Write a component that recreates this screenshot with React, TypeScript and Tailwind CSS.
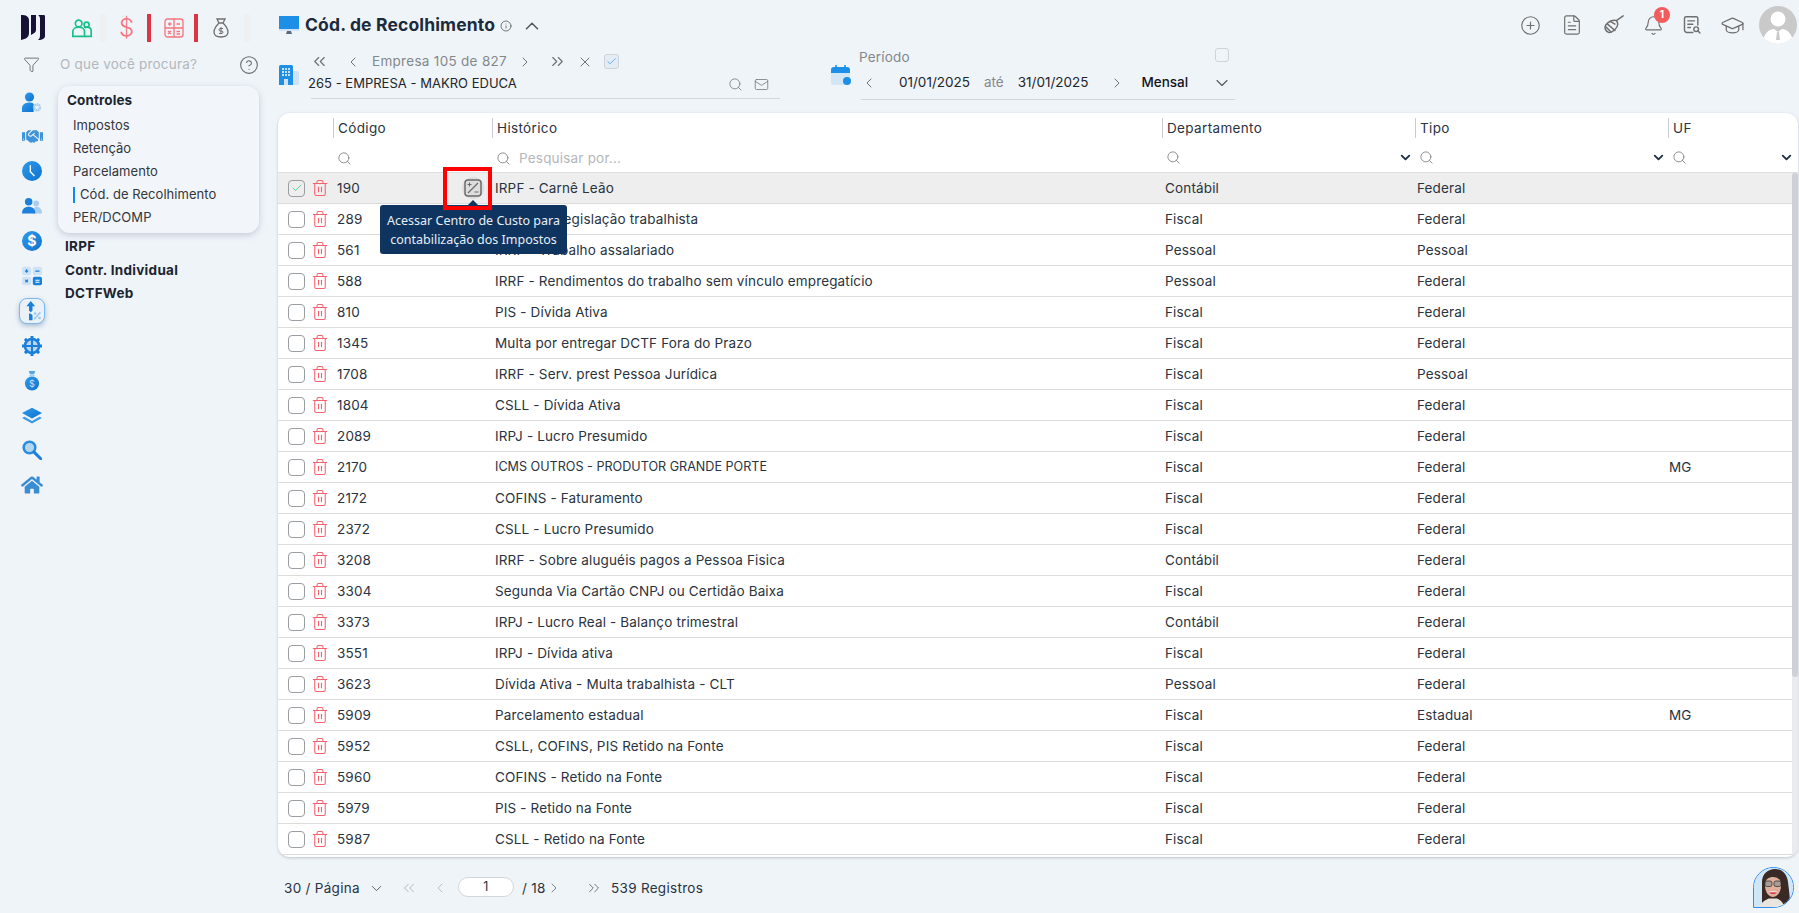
import { ReactNode } from 'react';
import {
  Bell,
  Check,
  ChevronDown,
  ChevronLeft,
  ChevronRight,
  ChevronUp,
  ChevronsLeft,
  ChevronsRight,
  CircleHelp,
  CirclePlus,
  FileText,
  Filter,
  GraduationCap,
  Info,
  Mail,
  Search,
  Trash2,
  X,
} from 'lucide-react';
import { FaHandshake, FaHome } from 'react-icons/fa';

type Row = { code: string; hist: string; dept: string; tipo: string; uf?: string };

const rows: Row[] = [
  { code: '190', hist: 'IRPF - Carnê Leão', dept: 'Contábil', tipo: 'Federal' },
  { code: '289', hist: 'Multa de Legislação trabalhista', dept: 'Fiscal', tipo: 'Federal' },
  { code: '561', hist: 'IRRF - Trabalho assalariado', dept: 'Pessoal', tipo: 'Pessoal' },
  { code: '588', hist: 'IRRF - Rendimentos do trabalho sem vínculo empregatício', dept: 'Pessoal', tipo: 'Federal' },
  { code: '810', hist: 'PIS - Dívida Ativa', dept: 'Fiscal', tipo: 'Federal' },
  { code: '1345', hist: 'Multa por entregar DCTF Fora do Prazo', dept: 'Fiscal', tipo: 'Federal' },
  { code: '1708', hist: 'IRRF - Serv. prest Pessoa Jurídica', dept: 'Fiscal', tipo: 'Pessoal' },
  { code: '1804', hist: 'CSLL - Dívida Ativa', dept: 'Fiscal', tipo: 'Federal' },
  { code: '2089', hist: 'IRPJ - Lucro Presumido', dept: 'Fiscal', tipo: 'Federal' },
  { code: '2170', hist: 'ICMS OUTROS - PRODUTOR GRANDE PORTE', dept: 'Fiscal', tipo: 'Federal', uf: 'MG' },
  { code: '2172', hist: 'COFINS - Faturamento', dept: 'Fiscal', tipo: 'Federal' },
  { code: '2372', hist: 'CSLL - Lucro Presumido', dept: 'Fiscal', tipo: 'Federal' },
  { code: '3208', hist: 'IRRF - Sobre aluguéis pagos a Pessoa Fisica', dept: 'Contábil', tipo: 'Federal' },
  { code: '3304', hist: 'Segunda Via Cartão CNPJ ou Certidão Baixa', dept: 'Fiscal', tipo: 'Federal' },
  { code: '3373', hist: 'IRPJ - Lucro Real - Balanço trimestral', dept: 'Contábil', tipo: 'Federal' },
  { code: '3551', hist: 'IRPJ - Dívida ativa', dept: 'Fiscal', tipo: 'Federal' },
  { code: '3623', hist: 'Dívida Ativa - Multa trabalhista - CLT', dept: 'Pessoal', tipo: 'Federal' },
  { code: '5909', hist: 'Parcelamento estadual', dept: 'Fiscal', tipo: 'Estadual', uf: 'MG' },
  { code: '5952', hist: 'CSLL, COFINS, PIS Retido na Fonte', dept: 'Fiscal', tipo: 'Federal' },
  { code: '5960', hist: 'COFINS - Retido na Fonte', dept: 'Fiscal', tipo: 'Federal' },
  { code: '5979', hist: 'PIS - Retido na Fonte', dept: 'Fiscal', tipo: 'Federal' },
  { code: '5987', hist: 'CSLL - Retido na Fonte', dept: 'Fiscal', tipo: 'Federal' },
];

const gridCols = 'grid grid-cols-[55px_159px_670px_253px_253px_1fr]';

const Svg = ({ children, size = 20 }: { children: ReactNode; size?: number }) => (
  <svg width={size} height={size} viewBox="0 0 24 24">
    {children}
  </svg>
);

const sideIcons: ReactNode[] = [
  <Svg key="a">
    <circle cx="9" cy="6" r="5.500" fill="url(#blue)" />
    <path d="M0 24v-5c0-4 4-6.500 9-6.500 2 0 4 .5 5 1.500v10z" fill="url(#blue)" />
    <circle cx="18" cy="18.500" r="3.500" fill="none" stroke="#a9cdec" strokeWidth="3" strokeDasharray="2 .6" />
  </Svg>,
  <FaHandshake key="b" size={21} color="#3f93d8" />,
  <Svg key="c">
    <circle cx="12" cy="12" r="12" fill="url(#blue)" />
    <path d="M10 5v8l5 5" fill="none" stroke="#fff" strokeWidth="1.600" />
  </Svg>,
  <Svg key="d">
    <circle cx="17" cy="9" r="3.500" fill="#a9cdec" />
    <path d="M12 21c0-5 3-8 6-8s6 3 6 8z" fill="#a9cdec" />
    <circle cx="8" cy="7" r="4.500" fill="#1a80dc" />
    <path d="M0 21c0-5 3-8 8-8s8 3 8 8z" fill="#1a80dc" />
  </Svg>,
  <Svg key="e">
    <circle cx="12" cy="12" r="12" fill="url(#blue)" />
    <text x="12" y="18" textAnchor="middle" fontSize="17" fontWeight="700" fill="#fff" fontFamily="Inter, sans-serif">$</text>
  </Svg>,
  <Svg key="f">
    <rect x="0" y="1" width="11" height="10" rx="2" fill="#cfe3f5" />
    <rect x="13" y="1" width="11" height="10" rx="2" fill="#cfe3f5" />
    <rect x="0" y="13" width="11" height="10" rx="2" fill="#cfe3f5" />
    <rect x="13" y="13" width="11" height="10" rx="2" fill="#1a80dc" />
    <path d="M3.500 6h4M5.500 4v4M16 6h5" stroke="#1a80dc" strokeWidth="1.500" />
    <path d="M4 16.500l3 3M7 16.500l-3 3" stroke="#1a80dc" strokeWidth="1.300" />
    <path d="M16 17h5M16 19.500h5" stroke="#fff" strokeWidth="1.300" />
  </Svg>,
  <div key="g" className="w-[26px] h-[26px] rounded-lg border border-[#7cb9ea] bg-[#eaf1f7] shadow-[0_2px_5px_rgba(80,120,160,0.45)] flex items-center justify-center">
    <Svg size={21}>
      <path d="M10 1l5 6h-3v5l-3 3 3 2v6H8v-7l2-2-2-2V7H5z" fill="#1a80dc" />
      <path d="M21 14L14 22" stroke="#9cc7ea" strokeWidth="1.800" />
      <circle cx="15" cy="15.500" r="1.500" fill="#9cc7ea" />
      <circle cx="20" cy="20.500" r="1.500" fill="#9cc7ea" />
    </Svg>
  </div>,
  <Svg key="h">
    <circle cx="12" cy="12" r="8.500" fill="#bcd9f1" stroke="#1a80dc" strokeWidth="3" />
    <path d="M12 4v16M4 12h16" stroke="#1a80dc" strokeWidth="2.600" />
    <path d="M12 0v3.500M12 20.500V24M0 12h3.500M20.500 12H24M3.500 3.500l2.500 2.500M18 18l2.500 2.500M20.500 3.500L18 6M6 18l-2.500 2.500" stroke="#1a80dc" strokeWidth="3.600" />
  </Svg>,
  <Svg key="i">
    <path d="M8 0h8l-1.500 4h-5z" fill="#5aa7e6" />
    <rect x="9" y="4.500" width="6" height="2" fill="#a9cdec" />
    <circle cx="12" cy="15" r="8.500" fill="url(#blue)" />
    <text x="12" y="19" textAnchor="middle" fontSize="11" fill="#bfe0f8" fontFamily="Inter, sans-serif">$</text>
  </Svg>,
  <Svg key="j">
    <path d="M12 2l12 6.500-12 6.500L0 8.500z" fill="url(#blue)" />
    <path d="M0 14.500l3-1.500 9 5 9-5 3 1.500L12 21z" fill="#3d9ae6" />
  </Svg>,
  <Svg key="k">
    <circle cx="9" cy="9" r="7" fill="#b6d6f0" stroke="#2a8ce0" strokeWidth="3" />
    <path d="M14.500 14.500L22.500 22.500" stroke="#1a80dc" strokeWidth="3.600" strokeLinecap="round" />
  </Svg>,
  <FaHome key="l" size={22} color="#3a8cd3" />,
];

const Percent = ({ className }: { className?: string }) => (
  <svg viewBox="0 0 18 18" width={18} height={18} className={className} fill="none" stroke="#6b6b6b">
    <rect x="1" y="1" width="16" height="16" rx="3" strokeWidth="1.500" />
    <path d="M14 4L4 14" strokeWidth="1.300" />
    <path d="M3.500 5.500h4M5.500 3.500v4M10.500 13h4" strokeWidth="1.100" />
  </svg>
);

const Broom = () => (
  <svg width={22} height={22} viewBox="0 0 24 24" fill="none" stroke="#6f6f6f" strokeWidth="1.600" strokeLinecap="round">
    <path d="M15 7l7-5" />
    <path d="M3 12c3-4 8-6 11-5 3 2 3 6-1 10-3 3-5 4-7 3-3-1-5-5-3-8z" />
    <path d="M5 11l8 7M8 8l5 3M3 14l6 6" />
  </svg>
);

const DocSearch = () => (
  <svg width={20} height={20} viewBox="0 0 24 24" fill="none" stroke="#6f6f6f" strokeWidth="1.700" strokeLinecap="round">
    <path d="M13 21H6a3 3 0 0 1-3-3V4a2 2 0 0 1 2-2h12a2 2 0 0 1 2 2v8" />
    <path d="M7 7h8M7 11h6M7 15h3" />
    <circle cx="17" cy="17" r="2.800" />
    <path d="M19 19l2.500 2.500" />
  </svg>
);

const Avatar = () => (
  <svg width={38} height={38} viewBox="0 0 38 38" className="rounded-full">
    <rect width="38" height="38" fill="#c9c9c9" />
    <circle cx="19" cy="13" r="7.500" fill="#fff" />
    <path d="M4 38c0-10 6-15 11-15l4 3 4-3c5 0 11 5 11 15z" fill="#fff" />
    <path d="M18 26h2l1 8h-4z" fill="#c9c9c9" />
  </svg>
);

const Assistant = () => (
  <svg width={41} height={41} viewBox="0 0 41 41">
    <rect width="41" height="41" fill="#cfe6f6" />
    <path d="M8 34V14C8 6 14 1 21 1s12 5 13 13c1 9 2 14 2 22H8z" fill="#3a2a26" />
    <path d="M11 17c0-6 4-8 8-8s8 2 8 8c0 7-3.500 12-8 12s-8-5-8-12z" fill="#dfb09c" />
    <rect x="11" y="13" width="7" height="5.500" rx="2" fill="#8a8f96" fillOpacity="0.6" stroke="#3b3836" strokeWidth="0.800" />
    <rect x="20" y="13" width="7" height="5.500" rx="2" fill="#8a8f96" fillOpacity="0.6" stroke="#3b3836" strokeWidth="0.800" />
    <path d="M14.500 22.500c3 1.500 6 1.500 9 0-1 3-2.500 3.500-4.500 3.500s-3.500-.5-4.500-3.500z" fill="#d43d4a" />
    <path d="M14.500 23.200h9l-.8 1h-7.400z" fill="#fff" />
    <path d="M5 41c1-6 6-9 10-10.500h8c4 1.500 7 5 8 10.500z" fill="#e9e4de" />
  </svg>
);

const SubItem = ({ label, active }: { label: string; active?: boolean }) => (
  <div className={`h-[23px] flex items-center text-[13px] tracking-[0.05px] text-[#33363b] ${active ? 'pl-0' : ''}`}>
    {active && <span className="w-[2px] h-4 bg-[#1088f2] mr-[5px]" />}
    {label}
  </div>
);

const Section = ({ label }: { label: string }) => (
  <div className="h-[23.500px] flex items-center text-[13.500px] font-bold tracking-[0.3px] text-[#1c2530] pl-[7px]">{label}</div>
);

const HeadCell = ({ label }: { label?: string }) => (
  <div className="flex items-start pt-[5px]">
    <div className="h-5 border-l border-[#c9ccd1] pl-[4px] text-[13.500px] tracking-[0.35px] leading-5 text-[#2a3340]">{label}</div>
  </div>
);

const FilterCell = ({ arrow, placeholder }: { arrow?: boolean; placeholder?: string }) => (
  <div className={`flex items-center h-5 pl-[4px] pr-[2px] gap-[8px] ${arrow ? '-mt-[1px]' : ''}`}>
    <Search size={15} strokeWidth={1.300} className="text-[#77797c]" />
    {placeholder && <span className="text-[13.500px] tracking-[0.2px] text-[#b4b7bb]">{placeholder}</span>}
    {arrow && <ChevronDown size={15} strokeWidth={3} className="ml-auto text-[#1f2f45]" />}
  </div>
);

export default function App() {
  return (
    <div
      className="relative flex w-screen h-screen overflow-hidden bg-[#eff4f9] text-[#2a3340]"
      style={{ fontFamily: 'Inter, "Liberation Sans", sans-serif' }}
    >
      <svg className="absolute w-0 h-0">
        <defs>
          <linearGradient id="blue" x1="0" y1="0" x2="1" y2="1">
            <stop offset="0" stopColor="#2f9bee" />
            <stop offset="1" stopColor="#0f72cc" />
          </linearGradient>
        </defs>
      </svg>

      {/* barra lateral */}
      <aside className="w-[278px] shrink-0 flex flex-col">
        <div className="h-[49px] flex items-center pl-[21px] pt-[6px]">
          <svg width={24} height={25} viewBox="0 0 24 25" fill="#151235">
            <path d="M0 0c5 0 8 1 8 6v12c0 4-3 6-8 7z" />
            <path d="M10 0h5v15c0 2-2 3.500-5 5z" />
            <path d="M17 0h6c.5 0 1 .5 1 2v19c0 2-2 4-7 4 1-1 2-2 2-4V4c0-2-.5-3-2-4z" />
          </svg>
          <span className="ml-[27px]">
            <svg width={20} height={20} viewBox="0 0 24 24" fill="none" stroke="#17c08a" strokeWidth="2">
              <circle cx="8" cy="6.500" r="4" />
              <circle cx="17.500" cy="8" r="3" />
              <path d="M1 22v-6c0-3 3-5 7-5s7 2 7 5v6z" />
              <path d="M15 12c1-1 2-1 3-1 3 0 5 2 5 5v6h-8" />
            </svg>
          </span>
          <span className="ml-[8px] w-[6px] h-7 bg-[#f0f0f0]" />
          <span className="ml-[13px] w-[28px] text-[#f8737c] text-[24px] font-light leading-none">$</span>
          <span className="w-1 h-7 bg-[#dc3545]" />
          <span className="ml-[13px]">
            <svg width={20} height={20} viewBox="0 0 20 20" fill="none" stroke="#f8737c" strokeWidth="1.300">
              <rect x="1" y="1" width="18" height="18" rx="2.500" />
              <path d="M10 1v18M1 10h18M4 6h3.500M5.700 4.200v3.500M12.500 6H16M4 13l3 3M7 13l-3 3M12.500 13.500H16M12.500 16H16" />
            </svg>
          </span>
          <span className="ml-[10px] w-1 h-7 bg-[#dc3545]" />
          <span className="ml-[15px]">
            <svg width={16} height={20} viewBox="0 0 16 20" fill="none" stroke="#6f6f6f" strokeWidth="1.300">
              <path d="M4 1h8l-2 4H6zM6 5C3 8 1 10 1 14c0 3 2 5 7 5s7-2 7-5c0-4-2-6-5-9" />
              <path d="M8 9v7M10 10.500H7a1.300 1.300 0 0 0 0 2.500h2a1.300 1.300 0 0 1 0 2.500H6" strokeWidth="1" />
            </svg>
          </span>
          <span className="ml-[15px] w-[6px] h-7 bg-[#f0f0f0]" />
        </div>

        <div className="h-[31px] flex items-center pl-[23px] pr-[19px]">
          <Filter size={17} strokeWidth={1.300} className="text-[#66696d]" />
          <span className="ml-[20px] text-[13.500px] tracking-[0.2px] text-[#b4b7bb]">O que você procura?</span>
          <CircleHelp size={20} strokeWidth={1.300} className="ml-auto text-[#66696d]" />
        </div>

        <div className="flex pt-[6px]">
          <div className="w-[64px] flex flex-col items-center gap-[9.900px] pt-[3px]">
            {sideIcons.map((icon, i) => (
              <div key={i} className="h-[25px] flex items-center justify-center">
                {icon}
              </div>
            ))}
          </div>
          <nav className="w-[201px] -ml-[6px]">
            <div className="rounded-xl bg-[#f2f6fa] shadow-[0_2px_6px_rgba(120,130,150,0.35)] h-[147px] pl-[9px] pt-[1px]">
              <div className="h-[26px] flex items-center text-[13.500px] font-bold tracking-[0.1px] text-[#1c2530]">Controles</div>
              <div className="pl-[6px] pt-[1px] flex flex-col">
                <SubItem label="Impostos" />
                <SubItem label="Retenção" />
                <SubItem label="Parcelamento" />
                <SubItem label="Cód. de Recolhimento" active />
                <SubItem label="PER/DCOMP" />
              </div>
            </div>
            <div className="pt-[1.500px]">
              <Section label="IRPF" />
              <Section label="Contr. Individual" />
              <Section label="DCTFWeb" />
            </div>
          </nav>
        </div>
      </aside>

      {/* conteúdo */}
      <main className="flex-1 flex flex-col min-w-0">
        <header className="h-[113px] flex flex-col">
          <div className="h-[50px] flex items-center">
            <svg width={20} height={20} viewBox="0 0 20 20" className="ml-[1px]">
              <rect x="0" y="1" width="20" height="13" fill="#1d8fe6" />
              <rect x="0" y="14" width="20" height="2" fill="#cfe3f5" />
              <path d="M8 16h4l1 3H7z" fill="#5b6b7b" />
            </svg>
            <h1 className="ml-[6px] w-[192px] whitespace-nowrap text-[17.500px] font-bold tracking-[0.15px] text-[#1c2b3c] pt-[1px]">Cód. de Recolhimento</h1>
            <Info size={12} strokeWidth={1.500} className="ml-[3px] mt-[2px] text-[#4a4d50]" />
            <ChevronUp size={22} strokeWidth={1.700} className="ml-[9px] mt-[2px] text-[#55585c]" />
            <div className="ml-auto mr-[2px] flex items-center text-[#6f6f6f]">
              <CirclePlus size={21} strokeWidth={1.300} />
              <FileText size={22} strokeWidth={1.300} className="ml-[20px]" />
              <span className="ml-[20px]"><Broom /></span>
              <span className="relative ml-[18px]">
                <Bell size={21} strokeWidth={1.300} />
                <span className="absolute -top-[8px] left-[11px] w-4 h-4 rounded-full bg-[#f25c5c] text-white text-[10px] font-bold flex items-center justify-center">1</span>
              </span>
              <span className="ml-[18px]"><DocSearch /></span>
              <GraduationCap size={25} strokeWidth={1.200} className="ml-[18px]" />
              <span className="ml-[14px]"><Avatar /></span>
            </div>
          </div>

          <div className="flex">
            <div className="flex items-start w-[502px]">
              <svg width={20} height={20} viewBox="0 0 20 20" className="mt-[15px] ml-[1px] shrink-0">
                <path d="M0 1.500C0 .500 1 0 2 0h10c1 0 2 .500 2 1.500V20H0z" fill="#1d8fe6" />
                <path d="M14 6h4c1 0 2 1 2 2v12h-6z" fill="#cfe3f5" />
                <rect x="5" y="14" width="4" height="6" fill="#cfe3f5" />
                <path d="M3 4h2M6 4h2M9 4h2M3 7h2M6 7h2M9 7h2M3 10h2M6 10h2M9 10h2" stroke="#fff" strokeWidth="1.400" />
              </svg>
              <div className="ml-[10px] flex-1 min-w-0">
                <div className="h-[22px] flex items-center text-[#6f7275] pt-[1px]">
                  <ChevronsLeft size={19} strokeWidth={1.500} className="ml-[1px]" />
                  <ChevronLeft size={16} strokeWidth={1.500} className="ml-[16px]" />
                  <span className="ml-[11px] w-[138px] text-[13.500px] tracking-[0.3px] text-[#85888b]">Empresa 105 de 827</span>
                  <ChevronRight size={16} strokeWidth={1.500} className="ml-[7px]" />
                  <ChevronsRight size={19} strokeWidth={1.500} className="ml-[15px]" />
                  <X size={16} strokeWidth={1.500} className="ml-[10px]" />
                  <span className="ml-[11px] w-[15px] h-[15px] rounded-[3px] border border-[#cfd3d8] bg-[#e4edf5] flex items-center justify-center">
                    <Check size={11} strokeWidth={2} className="text-[#55a8ec]" />
                  </span>
                </div>
                <div className="mt-[1px] h-[26px] flex items-center border-b border-[#d3d6da] pb-[3px] ml-[2px]">
                  <span className="-ml-[3px] text-[13px] tracking-[0.02px] text-[#22262b]">265 - EMPRESA - MAKRO EDUCA</span>
                  <Search size={15} strokeWidth={1.300} className="ml-auto text-[#77797c]" />
                  <Mail size={15} strokeWidth={1.300} className="ml-[11px] mr-[11px] text-[#77797c]" />
                </div>
              </div>
            </div>

            <div className="ml-[51px] flex items-start">
              <svg width={20} height={20} viewBox="0 0 20 20" className="mt-[15px] shrink-0">
                <rect x="0" y="2" width="19" height="18" rx="3" fill="#d3e6f6" />
                <path d="M0 5a3 3 0 0 1 3-3h13a3 3 0 0 1 3 3v3H0z" fill="#1d8fe6" />
                <path d="M5 0v4M14 0v4" stroke="#1d8fe6" strokeWidth="1.600" />
                <circle cx="16" cy="16" r="4" fill="#1d8fe6" />
              </svg>
              <div className="ml-[10px] w-[374px] -mt-[2px]">
                <div className="h-[19px] flex items-center pr-[6px]">
                  <span className="-ml-[2px] text-[13.500px] tracking-[0.2px] text-[#85888b]">Período</span>
                  <span className="ml-auto -mt-[6px] w-[14px] h-[14px] rounded-[3px] border border-[#cfd3d8]" />
                </div>
                <div className="mt-[1px] h-[32px] flex items-center border-b border-[#d3d6da] pb-[2px] text-[13.500px]">
                  <ChevronLeft size={16} strokeWidth={1.500} className="text-[#6f7275]" />
                  <span className="ml-[22px] text-[#22262b]">01/01/2025</span>
                  <span className="ml-[14px] text-[#85888b]">até</span>
                  <span className="ml-[14px] text-[#22262b]">31/01/2025</span>
                  <ChevronRight size={16} strokeWidth={1.500} className="ml-[21px] text-[#6f7275]" />
                  <span className="ml-[16px] font-medium text-[#11151a]">Mensal</span>
                  <ChevronDown size={20} strokeWidth={1.300} className="ml-auto mr-[3px] text-[#55585c]" />
                </div>
              </div>
            </div>
          </div>
        </header>

        <section className="w-[1520px] h-[744px] rounded-xl bg-white shadow-[0_1px_3px_rgba(100,110,130,0.35)] flex flex-col overflow-hidden">
          <div className={`${gridCols} h-[35px]`}>
            <div />
            <HeadCell label="Código" />
            <HeadCell label="Histórico" />
            <HeadCell label="Departamento" />
            <HeadCell label="Tipo" />
            <HeadCell label="UF" />
          </div>
          <div className={`${gridCols} h-[25px] border-b border-[#dfdfdf]`}>
            <div />
            <FilterCell />
            <FilterCell placeholder="Pesquisar por..." />
            <FilterCell arrow />
            <FilterCell arrow />
            <div className="pr-[2px]"><FilterCell arrow /></div>
          </div>

          <div className="relative flex-1 overflow-hidden">
            {rows.map((r, i) => (
              <div
                key={r.code}
                className={`${gridCols} h-[31px] items-center border-b border-[#dcdcdc] text-[13.500px] tracking-[0.15px] text-[#2a3340] ${i === 0 ? 'bg-[#eeeeee]' : ''}`}
              >
                <div className="flex items-center pl-[10px] gap-[6px]">
                  <span className={`w-[17px] h-[17px] rounded-[4px] border border-[#9a9da1] flex items-center justify-center ${i === 0 ? 'bg-[#eeeeee]' : 'bg-white'}`}>
                    {i === 0 && <Check size={12} strokeWidth={2} className="text-[#63d3a6]" />}
                  </span>
                  <Trash2 size={18} strokeWidth={1.400} className="text-[#f5616c]" />
                </div>
                <div className="flex items-center justify-between pl-[4px] pr-[8px]">
                  {r.code}
                  {i === 0 && (
                    <span className="w-[22px] h-[22px] rounded-full bg-[#dedede] flex items-center justify-center">
                      <Percent />
                    </span>
                  )}
                </div>
                <div className={`pl-[3px] ${r.hist === r.hist.toUpperCase() ? 'text-[12.600px] tracking-normal' : ''}`}>{r.hist}</div>
                <div className="pl-[3px]">{r.dept}</div>
                <div className="pl-[2px]">{r.tipo}</div>
                <div className="pl-[1px]">{r.uf}</div>
              </div>
            ))}
            {/* barra de rolagem */}
            <div className="absolute top-0 bottom-0 right-0 w-[6px] bg-[#e9ebef]">
              <div className="h-[504px] rounded-full bg-[#cdd0d6]" />
            </div>
          </div>
        </section>

        <footer className="h-[56px] flex items-center pt-[6px] text-[13.500px] tracking-[0.3px] text-[#2a3340]">
          <span className="ml-[6px] w-[76px] shrink-0 whitespace-nowrap">30 / Página</span>
          <ChevronDown size={17} strokeWidth={1.300} className="ml-[8px] text-[#55585c]" />
          <ChevronsLeft size={18} strokeWidth={1.300} className="ml-[15px] text-[#b4b7bb]" />
          <ChevronLeft size={16} strokeWidth={1.300} className="ml-[14px] text-[#b4b7bb]" />
          <span className="ml-[10px] w-[56px] h-[20px] -mt-[2px] rounded-full bg-white border border-[#d3d6da] flex items-center justify-center text-[12.500px]">1</span>
          <span className="ml-[8px] w-[22px] shrink-0 whitespace-nowrap">/ 18</span>
          <ChevronRight size={16} strokeWidth={1.300} className="ml-[2px] text-[#6f7275]" />
          <ChevronsRight size={18} strokeWidth={1.300} className="ml-[23px] text-[#6f7275]" />
          <span className="ml-[8px]">539 Registros</span>
        </footer>
      </main>

      {/* tooltip do centro de custo */}
      <div className="absolute left-[380px] top-[205px] w-[187px] h-[49px] rounded-[3px] bg-[#0f3460] flex items-center justify-center text-center text-[12.500px] leading-[19px] text-[#e8eef5]" style={{ fontFamily: '"Noto Sans", sans-serif' }}>
        <span>Acessar Centro de Custo para contabilização dos Impostos</span>
        <span className="absolute -top-[5px] left-[88px] w-0 h-0 border-x-[5px] border-x-transparent border-b-[5px] border-b-[#0f3460]" />
      </div>
      <div className="absolute left-[443px] top-[167px] w-[49px] h-[43px] border-[4px] border-[#ff0000]" />

      {/* assistente */}
      <div className="absolute left-[1753px] top-[867px] w-[41px] h-[41px] overflow-hidden rounded-[50%_50%_50%_0] border border-[#2f8ff0]">
        <Assistant />
      </div>
    </div>
  );
}
